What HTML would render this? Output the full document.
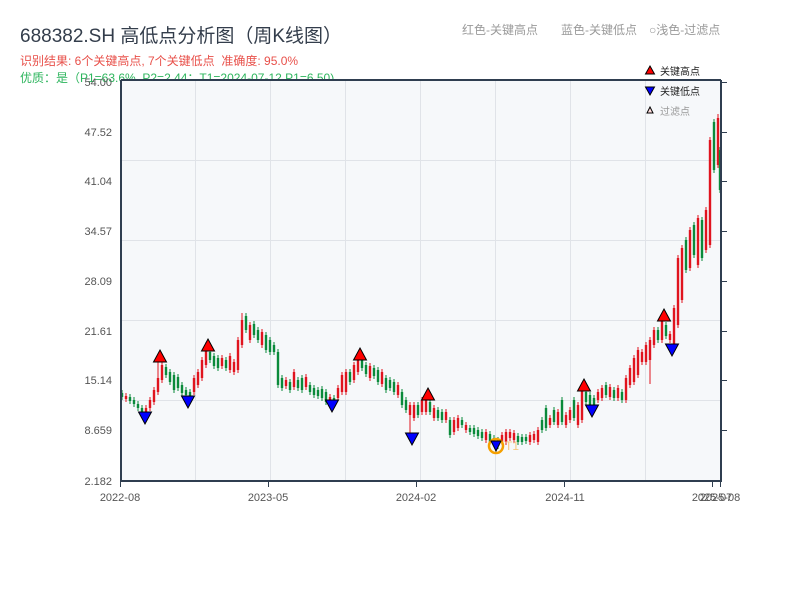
<!DOCTYPE html>
<html><head><meta charset="utf-8">
<style>
html,body{margin:0;padding:0;background:#fff;}
body{width:800px;height:600px;overflow:hidden;position:relative;font-family:"Liberation Sans","Noto Sans CJK SC",sans-serif;}
.t{position:absolute;white-space:nowrap;}
</style></head><body>
<div class="t" style="left:20px;top:21px;font-size:19px;color:#333d4b;">688382.SH 高低点分析图（周K线图）</div>
<div class="t" style="left:20px;top:52px;font-size:12px;color:#e8504a;">识别结果: 6个关键高点, 7个关键低点&nbsp;&nbsp;准确度: 95.0%</div>
<div class="t" style="left:20px;top:69px;font-size:12px;color:#2db55d;">优质：是（P1=63.6%, P2=2.44；T1=2024-07-12 P1=6.50)</div>
<div class="t" style="left:462px;top:21px;font-size:12px;color:#9a9a9a;">红色-关键高点</div>
<div class="t" style="left:561px;top:21px;font-size:12px;color:#9a9a9a;">蓝色-关键低点</div>
<div class="t" style="left:649px;top:21px;font-size:12px;color:#9a9a9a;">○浅色-过滤点</div>
<svg width="800" height="600" style="position:absolute;left:0;top:0" xmlns="http://www.w3.org/2000/svg" font-family="Liberation Sans, Noto Sans CJK SC, sans-serif">
<rect x="121" y="80" width="600" height="401" fill="#f6f8fa"/>
<g stroke="#e0e3e8" stroke-width="1">
<line x1="121" x2="721" y1="160.5" y2="160.5"/><line x1="121" x2="721" y1="240.5" y2="240.5"/><line x1="121" x2="721" y1="320.5" y2="320.5"/><line x1="121" x2="721" y1="400.5" y2="400.5"/>
<line y1="80" y2="481" x1="195.5" x2="195.5"/><line y1="80" y2="481" x1="270.5" x2="270.5"/><line y1="80" y2="481" x1="345.5" x2="345.5"/><line y1="80" y2="481" x1="420.5" x2="420.5"/><line y1="80" y2="481" x1="495.5" x2="495.5"/><line y1="80" y2="481" x1="570.5" x2="570.5"/><line y1="80" y2="481" x1="645.5" x2="645.5"/>
</g>
<!-- red candles -->
<path fill="none" stroke="#e0141e" stroke-width="2.4" d="M126 396V399M146 408V414M150 400V408M154 390V402M158 378V392M162 365V380M194 378V392M198 372V385M202 360V378M206 350V365M222 358V366M230 356V370M234 362V372M238 340V370M242 320V345M250 325V340M262 332V345M286 380V386M294 372V387M306 377V387M330 397V403M338 388V398M342 375V392M346 372V392M354 365V380M358 358V372M370 366V378M382 372V384M398 385V395M410 405V415M414 405V418M422 400V412M426 398V412M434 408V418M446 412V420M454 420V432M458 418V428M466 425V430M486 432V440M502 435V442M506 432V442M510 432V438M514 433V440M530 435V442M534 434V440M538 430V442M550 418V425M558 412V425M566 415V425M570 410V420M578 405V425M582 385V420M598 392V400M602 388V398M610 387V397M618 388V398M626 378V400M630 368V385M634 358V382M638 350V375M642 352V362M646 345V362M650 340V360M654 330V345M662 320V340M670 334V340M674 308V345M678 258V325M682 248V300M690 230V268M698 218V265M706 210V250M710 140V245M718 118V165"/>
<path fill="none" stroke="#e0141e" stroke-width="1" d="M126 393V402M146 405V417M150 397V411M154 387V405M158 360V395M162 362V383M194 375V395M198 369V388M202 357V381M206 342V368M222 355V369M230 353V373M234 359V375M238 337V373M242 313V348M250 322V343M262 329V348M286 377V389M294 369V390M306 374V390M330 394V406M338 385V401M342 372V395M346 369V395M354 362V383M358 355V375M370 363V381M382 369V387M398 382V398M410 402V435M414 402V421M422 397V415M426 395V415M434 405V421M446 409V423M454 417V435M458 415V431M466 422V433M486 429V443M502 432V445M506 429V445M510 429V441M514 430V443M530 432V445M534 431V443M538 427V445M550 415V428M558 409V428M566 412V428M570 407V423M578 402V428M582 382V423M598 389V403M602 385V401M610 384V400M618 385V401M626 375V403M630 365V388M634 355V385M638 347V378M642 349V365M646 342V365M650 337V384M654 327V348M662 317V343M670 331V343M674 305V348M678 255V328M682 245V303M690 227V271M698 215V268M706 207V253M710 137V248M718 114V168"/>
<!-- green candles -->
<path fill="none" stroke="#0a8a3a" stroke-width="2.4" d="M122 393V397M130 397V401M134 400V404M138 404V408M142 408V412M166 367V375M170 372V382M174 375V390M178 377V388M182 385V393M186 390V395M190 392V396M210 352V360M214 356V366M218 358V368M226 360V368M246 316V330M254 324V335M258 330V340M266 335V350M270 340V352M274 345V352M278 352V385M282 378V388M290 382V390M298 380V388M302 378V390M310 385V392M314 388V395M318 390V396M322 389V398M326 392V402M334 398V405M350 372V382M362 355V368M366 365V374M374 368V376M378 370V382M386 378V390M390 380V388M394 382V392M402 392V405M406 400V410M418 405V415M430 402V412M438 410V418M442 412V420M450 420V435M462 420V425M470 428V432M474 428V434M478 430V436M482 432V438M490 434V442M494 438V444M498 440V446M518 436V442M522 437V442M526 437V441M542 420V430M546 408V428M554 410V422M562 400V422M574 400V418M586 392V402M590 395V405M594 398V405M606 385V395M614 390V398M622 392V400M658 330V340M666 325V336M686 240V270M694 225V255M702 220V258M714 122V170M720 150V190"/>
<path fill="none" stroke="#0a8a3a" stroke-width="1" d="M122 390V400M130 394V404M134 397V407M138 401V411M142 405V415M166 364V378M170 369V385M174 372V393M178 374V391M182 382V396M186 387V398M190 389V399M210 349V363M214 353V369M218 355V371M226 357V371M246 313V333M254 321V338M258 327V343M266 332V353M270 337V355M274 342V355M278 349V388M282 375V391M290 379V393M298 377V391M302 375V393M310 382V395M314 385V398M318 387V399M322 386V401M326 389V405M334 395V408M350 369V385M362 352V371M366 362V377M374 365V379M378 367V385M386 375V393M390 377V391M394 379V395M402 389V408M406 397V413M418 402V418M430 399V415M438 407V421M442 409V423M450 417V438M462 417V428M470 425V435M474 425V437M478 427V439M482 429V441M490 431V445M494 435V447M498 437V449M518 433V445M522 434V445M526 434V444M542 417V433M546 405V431M554 407V425M562 397V425M574 397V421M586 389V405M590 392V408M594 395V408M606 382V398M614 387V401M622 389V403M658 327V343M666 322V339M686 237V273M694 222V258M702 217V261M714 119V173M720 147V193"/>
<!-- markers -->
<g stroke="#000" stroke-width="1">
<polygon points="160,350 166.5,362 153.5,362" fill="#f00"/>
<polygon points="208,339 214.5,351 201.5,351" fill="#f00"/>
<polygon points="360,348 366.5,360 353.5,360" fill="#f00"/>
<polygon points="428,388 434.5,400 421.5,400" fill="#f00"/>
<polygon points="584,379 590.5,391 577.5,391" fill="#f00"/>
<polygon points="664,309 670.5,321 657.5,321" fill="#f00"/>
<polygon points="138.5,412 151.5,412 145,424" fill="#00f"/>
<polygon points="181.5,396 194.5,396 188,408" fill="#00f"/>
<polygon points="325.5,400 338.5,400 332,412" fill="#00f"/>
<polygon points="405.5,433 418.5,433 412,445" fill="#00f"/>
<polygon points="585.5,405 598.5,405 592,417" fill="#00f"/>
<polygon points="665.5,344 678.5,344 672,356" fill="#00f"/>
</g>
<circle cx="496" cy="446" r="7" fill="none" stroke="#f5a000" stroke-width="2.5"/>
<polygon points="491,441 501,441 496,451" fill="#00f" stroke="#000" stroke-width="1"/>
<text x="505" y="450" font-size="12" fill="#f8c880">T1</text>
<g stroke="#2f3e50" stroke-width="2" fill="none">
<line x1="121" y1="80" x2="121" y2="482"/><line x1="120" y1="481" x2="722" y2="481"/><line x1="121" y1="80" x2="721" y2="80"/><line x1="721" y1="80" x2="721" y2="482"/>
</g>
<g font-size="11" fill="#555" text-anchor="end">
<text x="112" y="86">54.00</text><text x="112" y="136">47.52</text><text x="112" y="185">41.04</text><text x="112" y="235">34.57</text><text x="112" y="285">28.09</text><text x="112" y="335">21.61</text><text x="112" y="384">15.14</text><text x="112" y="434">8.659</text><text x="112" y="485">2.182</text>
</g>
<g stroke="#2f3e50" stroke-width="1">
<line x1="721" x2="727" y1="82.5" y2="82.5"/><line x1="721" x2="727" y1="132.5" y2="132.5"/><line x1="721" x2="727" y1="181.5" y2="181.5"/><line x1="721" x2="727" y1="231.5" y2="231.5"/><line x1="721" x2="727" y1="281.5" y2="281.5"/><line x1="721" x2="727" y1="331.5" y2="331.5"/><line x1="721" x2="727" y1="380.5" y2="380.5"/><line x1="721" x2="727" y1="430.5" y2="430.5"/>
<line x1="120.5" x2="120.5" y1="481" y2="487"/><line x1="268.5" x2="268.5" y1="481" y2="487"/><line x1="416.5" x2="416.5" y1="481" y2="487"/><line x1="564.5" x2="564.5" y1="481" y2="487"/><line x1="712.5" x2="712.5" y1="481" y2="487"/><line x1="720.5" x2="720.5" y1="481" y2="487"/>
</g>
<g font-size="11" fill="#555" text-anchor="middle">
<text x="120" y="501">2022-08</text><text x="268" y="501">2023-05</text><text x="416" y="501">2024-02</text><text x="565" y="501">2024-11</text><text x="712" y="501">2025-07</text><text x="720" y="501">2025-08</text>
</g>
<g font-size="10">
<polygon points="650,66 654.5,74 645.5,74" fill="#f00" stroke="#000" stroke-width="1"/><text x="660" y="75" fill="#222">关键高点</text>
<polygon points="645.5,87 654.5,87 650,95" fill="#00f" stroke="#000" stroke-width="1"/><text x="660" y="95" fill="#222">关键低点</text>
<polygon points="650,107 653,113 647,113" fill="#fdd" stroke="#000" stroke-width="1"/><text x="660" y="115" fill="#999">过滤点</text>
</g>
</svg>
</body></html>
